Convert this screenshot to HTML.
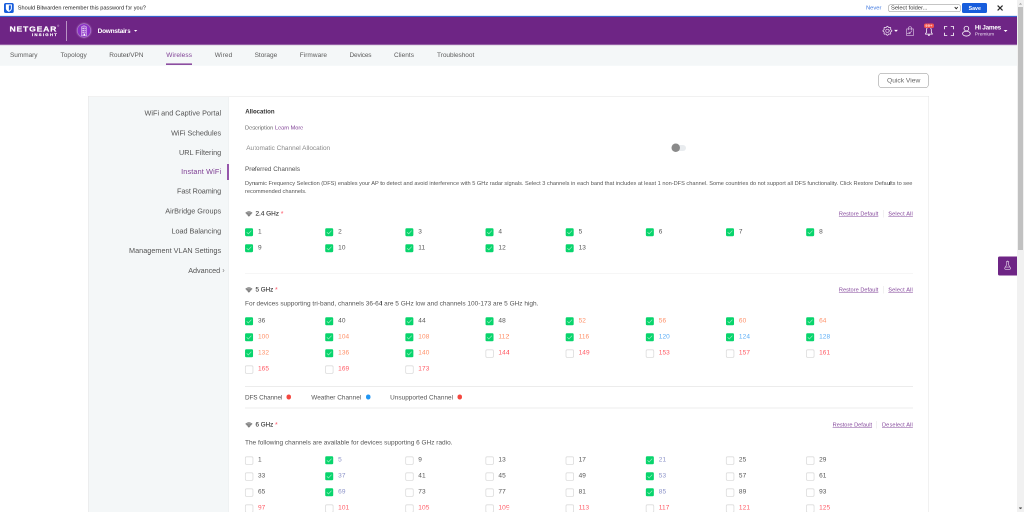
<!DOCTYPE html>
<html lang="en">
<head>
<meta charset="utf-8">
<title>NETGEAR Insight - Instant WiFi</title>
<meta name="viewport" content="width=1024, initial-scale=1">
<style>
html,body{margin:0;padding:0;width:1024px;height:512px;overflow:hidden;background:#fff}
#stage{position:absolute;left:0;top:0;width:2048px;height:1024px;overflow:hidden;transform:scale(.5);transform-origin:0 0;will-change:transform;
 font-family:"Liberation Sans",sans-serif;background:#fff}
#stage div,#stage span,#stage a,#stage svg,#stage button,#stage aside,#stage h3,#stage h4,#stage label,#stage i{position:absolute;display:block;margin:0;padding:0}
#stage span,#stage a,#stage h3,#stage h4,#stage label{line-height:1;white-space:nowrap;font-weight:400;text-decoration:none}
#stage button{border:0;font:inherit}
#stage ul,#stage li{list-style:none;margin:0;padding:0;position:static}
#stage header,#stage nav,#stage main,#stage section,#stage #bw{position:static}
</style>
</head>
<body>
<div id="stage">
<div id="bw">
<div style="left:0px;top:0px;width:2034px;height:32px;background:#fff;"></div>
<div style="left:0px;top:31px;width:2034px;height:1px;background:#c6d3f1;"></div>
<div style="left:0px;top:32px;width:2034px;height:2px;background:#3563cf;"></div>
<svg style="left:8px;top:6px;width:20px;height:20px;" viewBox="0 0 40 40" preserveAspectRatio="none"><rect x="0" y="0" width="39" height="40" rx="7" fill="#175ddc"/><path d="M7.500 5.500h24v15.500c0 7-6 11.500-12 14.500C13.500 32.500 7.500 28 7.500 21z" fill="#fff"/><path d="M19.500 9.500v21.500c4.500-2.500 8-5.500 8-10V9.500z" fill="#175ddc"/></svg>
<span style="left:35.5px;top:10.15px;font-size:11.17px;color:#222;">Should Bitwarden remember this password for you?</span>
<a style="left:1732px;top:10.23px;font-size:11.55px;color:#3f78e0;">Never</a>
<div style="left:1777px;top:8.5px;width:143.6px;height:15px;background:#fff;border:1px solid #8a8a8a;border-radius:3px;box-sizing:border-box;"></div>
<span style="left:1782px;top:10.25px;font-size:11.52px;color:#333;">Select folder...</span>
<svg style="left:1908px;top:13px;width:9px;height:6px;" viewBox="-0.4 0 9 6" preserveAspectRatio="none"><path d="M1 1l3 3.500L7 1" fill="none" stroke="#222" stroke-width="1.800"/></svg>
<div style="left:1924.4px;top:5.6px;width:49.6px;height:20.2px;background:#175ddc;border-radius:3px;"></div>
<span style="left:1937.2px;top:11.28px;font-size:10.53px;color:#fff;font-weight:700;">Save</span>
<svg style="left:1994px;top:9px;width:13px;height:14px;" viewBox="0 -0.774 12.581 13.548" preserveAspectRatio="none"><path d="M1.200 1.200l9.600 9.600M10.800 1.200l-9.600 9.600" fill="none" stroke="#2a2a2a" stroke-width="2.300"/></svg>
</div>
<header>
<div style="left:0px;top:34px;width:2034px;height:55px;background:#6e2585;"></div>
<div style="left:0px;top:89px;width:2034px;height:1px;background:#b593c0;"></div>
<span class="logo" style="left:19px;top:50.2px;font-size:15px;color:#fff;font-weight:700;letter-spacing:1.37px;-webkit-text-stroke:0.4px #fff;transform:scaleX(1.15);transform-origin:0 0;">NETGEAR</span>
<span style="left:114.4px;top:50px;font-size:5.2px;color:#e8d8ee;">®</span>
<span class="logo2" style="left:64px;top:66.01px;font-size:7.2px;color:#fff;font-weight:700;letter-spacing:2.05px;-webkit-text-stroke:0.3px #fff;transform:scaleX(1.2);transform-origin:0 0;">INSIGHT</span>
<div style="left:132px;top:41.6px;width:2px;height:40.2px;background:#b892c4;"></div>
<div style="left:154px;top:47px;width:28px;height:28px;background:#8a2fc6;border-radius:50%;box-sizing:border-box;border:1.5px solid #b98fd0;box-shadow:0 0 3px 1px rgba(200,160,220,.55);"></div>
<svg style="left:162px;top:50px;width:12px;height:23px;" viewBox="0 -0.4 12 23" preserveAspectRatio="none"><path d="M3 2L6 .9 9 2" fill="none" stroke="#dcc2ee" stroke-width="1"/><rect x=".9" y="3.200" width="10.200" height="17.900" fill="rgba(255,255,255,.2)" stroke="#d9bdec" stroke-width="1.200"/><path d="M2.900 6.800h2.900M7.300 6.800h1.800M2.900 10.500h2.900M7.300 10.500h1.800M2.900 14.200h2.900M7.300 14.200h1.800" stroke="#fff" stroke-width="1.500" fill="none"/><rect x="5.200" y="17" width="2.800" height="3.600" fill="#fff"/></svg>
<span style="left:195.2px;top:55px;font-size:13px;color:#fff;font-weight:700;letter-spacing:-0.45px;">Downstairs</span>
<svg style="left:268px;top:60px;width:7px;height:4px;" viewBox="0 0 10.606 6.111" preserveAspectRatio="none"><path d="M0 0h10L5 5.500z" fill="#fff"/></svg>
<svg style="left:1764px;top:51px;width:21px;height:21px;" viewBox="-0.8 -0.6 21 21" preserveAspectRatio="none"><path d="M19.0 10.0L18.9 10.5L18.6 10.9L18.2 11.3L17.7 11.6L17.2 11.9L16.8 12.2L16.6 12.5L16.4 12.9L16.4 13.3L16.5 13.8L16.6 14.3L16.7 14.9L16.7 15.5L16.6 16.0L16.4 16.4L16.0 16.6L15.5 16.7L14.9 16.7L14.3 16.6L13.8 16.5L13.3 16.4L12.9 16.4L12.5 16.6L12.2 16.8L11.9 17.2L11.6 17.7L11.3 18.2L10.9 18.6L10.5 18.9L10.0 19.0L9.5 18.9L9.1 18.6L8.7 18.2L8.4 17.7L8.1 17.2L7.8 16.8L7.5 16.6L7.1 16.4L6.7 16.4L6.3 16.5L5.7 16.6L5.1 16.7L4.5 16.7L4.0 16.6L3.6 16.4L3.4 16.0L3.3 15.5L3.3 14.9L3.4 14.3L3.5 13.8L3.6 13.3L3.6 12.9L3.4 12.5L3.2 12.2L2.8 11.9L2.3 11.6L1.8 11.3L1.4 10.9L1.1 10.5L1.0 10.0L1.1 9.5L1.4 9.1L1.8 8.7L2.3 8.4L2.8 8.1L3.2 7.8L3.4 7.5L3.6 7.1L3.6 6.7L3.5 6.2L3.4 5.7L3.3 5.1L3.3 4.5L3.4 4.0L3.6 3.6L4.0 3.4L4.5 3.3L5.1 3.3L5.7 3.4L6.2 3.5L6.7 3.6L7.1 3.6L7.5 3.4L7.8 3.2L8.1 2.8L8.4 2.3L8.7 1.8L9.1 1.4L9.5 1.1L10.0 1.0L10.5 1.1L10.9 1.4L11.3 1.8L11.6 2.3L11.9 2.8L12.2 3.2L12.5 3.4L12.9 3.6L13.3 3.6L13.8 3.5L14.3 3.4L14.9 3.3L15.5 3.3L16.0 3.4L16.4 3.6L16.6 4.0L16.7 4.5L16.7 5.1L16.6 5.7L16.5 6.2L16.4 6.7L16.4 7.1L16.6 7.5L16.8 7.8L17.2 8.1L17.7 8.4L18.2 8.7L18.6 9.1L18.9 9.5z" fill="none" stroke="#f4ecf7" stroke-width="1.5" stroke-linejoin="round"/><circle cx="10" cy="10" r="3.3" fill="none" stroke="#e8daee" stroke-width="1.3"/></svg>
<svg style="left:1788px;top:59px;width:8px;height:5px;" viewBox="-0.263 -1.1 10.526 6.875" preserveAspectRatio="none"><path d="M0 0h10L5 5.500z" fill="#fff"/></svg>
<svg style="left:1812px;top:52px;width:16px;height:21px;" viewBox="0 0 16 21" preserveAspectRatio="none"><path d="M1.300 5.800h13.400v13.200H1.300z" fill="none" stroke="#dcc8e4" stroke-width="1.250"/><path d="M5 8.200V4.300a3 3 0 0 1 6 0v3.900" fill="none" stroke="#dcc8e4" stroke-width="1.250"/><path d="M2 15.300h5.500l1.500-1.800M5.300 11.800l2.200 2.300 4.800-5" fill="none" stroke="#dcc8e4" stroke-width="1.250"/></svg>
<svg style="left:1849px;top:53px;width:18px;height:20px;" viewBox="-0.2 -0.2 18 20" preserveAspectRatio="none"><path d="M8.600 1.500c-3 0-4.800 2.200-4.800 5v4.800L1.500 15h14.200l-2.300-3.700V6.500c0-2.800-1.800-5-4.800-5z" fill="none" stroke="#fff" stroke-width="1.500" stroke-linejoin="round"/><path d="M6.400 16.400a2.200 2.200 0 0 0 4.400 0z" fill="#fff"/></svg>
<div style="left:1847.8px;top:46.6px;width:20.4px;height:9.4px;background:#f2534f;border-radius:3.5px;"></div>
<span style="left:1850.8px;top:47.57px;font-size:7.6px;color:#ffe3e0;font-weight:700;letter-spacing:0.55px;">99+</span>
<svg style="left:1888px;top:52px;width:20px;height:20px;" viewBox="0 0 20 20" preserveAspectRatio="none"><path d="M1 6.500V1h5.500M13.500 1H19v5.500M19 13.500V19h-5.500M6.500 19H1v-5.500" fill="none" stroke="#fff" stroke-width="1.700"/></svg>
<svg style="left:1924px;top:50px;width:18px;height:23px;" viewBox="0 -0.8 18 23" preserveAspectRatio="none"><ellipse cx="8.800" cy="16.500" rx="7.700" ry="4.800" fill="none" stroke="#fff" stroke-width="1.600"/><circle cx="8.800" cy="6.400" r="4.700" fill="#6e2585" stroke="#fff" stroke-width="1.600"/></svg>
<span style="left:1949.8px;top:48.96px;font-size:12.8px;color:#fff;font-weight:700;letter-spacing:-0.52px;">Hi James</span>
<span style="left:1949.8px;top:63.47px;font-size:9.6px;color:#eadcf0;">Premium</span>
<svg style="left:2007px;top:60px;width:8px;height:4px;" viewBox="-0.526 0 10.526 5.5" preserveAspectRatio="none"><path d="M0 0h10L5 5.500z" fill="#fff"/></svg>
</header>
<nav>
<div style="left:0px;top:90px;width:2034px;height:41px;background:#f4f7f8;"></div>
<div style="left:0px;top:131px;width:2034px;height:1px;background:#f8fafb;"></div>
<div style="left:0px;top:90px;width:2034px;height:1px;background:#d6c7dc;"></div>
<a style="left:20px;top:103px;font-size:13px;color:#5c5c5c;letter-spacing:-0.1px;">Summary</a>
<a style="left:121px;top:103px;font-size:13px;color:#5c5c5c;letter-spacing:0.07px;">Topology</a>
<a style="left:218.5px;top:103px;font-size:13px;color:#5c5c5c;letter-spacing:-0.1px;">Router/VPN</a>
<a style="left:332.5px;top:103px;font-size:13px;color:#7d3d93;letter-spacing:0.24px;">Wireless</a>
<div style="left:331.7px;top:126px;width:52.3px;height:1px;background:#e0cfe6;"></div>
<div style="left:331.7px;top:127px;width:52.3px;height:3px;background:#8c4ea0;"></div>
<a style="left:429.5px;top:103px;font-size:13px;color:#5c5c5c;letter-spacing:0.26px;">Wired</a>
<a style="left:509.2px;top:103px;font-size:13px;color:#5c5c5c;letter-spacing:-0.04px;">Storage</a>
<a style="left:599.5px;top:103px;font-size:13px;color:#5c5c5c;letter-spacing:0.05px;">Firmware</a>
<a style="left:699px;top:103px;font-size:13px;color:#5c5c5c;letter-spacing:-0.37px;">Devices</a>
<a style="left:788px;top:103px;font-size:13px;color:#5c5c5c;letter-spacing:0.04px;">Clients</a>
<a style="left:874px;top:103px;font-size:13px;color:#5c5c5c;letter-spacing:-0.08px;">Troubleshoot</a>
</nav>
<main>
<button style="left:1757px;top:146px;width:100px;height:29.5px;border:1.2px solid #8c8c8c;border-radius:6px;box-sizing:border-box;background:#fff;"></button>
<span style="left:1774px;top:154.29px;font-size:13.36px;color:#666;">Quick View</span>
<div style="left:176px;top:192px;width:1682.4px;height:848px;border:1px solid #e3e3e3;box-sizing:border-box;background:#fff;"></div>
<aside style="left:177px;top:193.5px;width:280.5px;height:846.5px;background:#f4f7f8;border-right:1px solid #e9ecee;box-sizing:border-box;"></aside>
<a style="left:289px;top:219.47px;font-size:14.56px;color:#555;letter-spacing:0.02px;">WiFi and Captive Portal</a>
<a style="left:342.2px;top:258.67px;font-size:14.56px;color:#555;letter-spacing:-0.07px;">WiFi Schedules</a>
<a style="left:358px;top:298.07px;font-size:14.56px;color:#555;">URL Filtering</a>
<a style="left:362.2px;top:336.07px;font-size:14.56px;color:#7d3d93;letter-spacing:0.3px;">Instant WiFi</a>
<a style="left:354px;top:375.47px;font-size:14.56px;color:#555;letter-spacing:-0.2px;">Fast Roaming</a>
<a style="left:330.5px;top:415.47px;font-size:14.56px;color:#555;letter-spacing:0.02px;">AirBridge Groups</a>
<a style="left:343px;top:454.67px;font-size:14.56px;color:#555;letter-spacing:-0.08px;">Load Balancing</a>
<a style="left:258px;top:494.07px;font-size:14.56px;color:#555;letter-spacing:0.03px;">Management VLAN Settings</a>
<a style="left:376.5px;top:534.07px;font-size:14.56px;color:#555;letter-spacing:-0.11px;">Advanced</a>
<span style="left:444.4px;top:533.47px;font-size:14.8px;color:#777;">›</span>
<div style="left:454px;top:327.5px;width:3.5px;height:32px;background:#9656ab;"></div>
<h3 style="left:490.4px;top:217.1px;font-size:12.17px;color:#333;font-weight:700;">Allocation</h3>
<span style="left:490px;top:249.92px;font-size:11.2px;color:#666;letter-spacing:0.06px;">Description</span>
<a style="left:550px;top:249.92px;font-size:11.2px;color:#7d3d93;letter-spacing:-0.07px;">Learn More</a>
<span style="left:492.4px;top:290.47px;font-size:12.92px;color:#888;">Automatic Channel Allocation</span>
<div style="left:1344px;top:289.8px;width:27.6px;height:12.2px;background:#e9ecef;border-radius:6px;"></div>
<div style="left:1342.6px;top:287.1px;width:17px;height:17px;background:#8a8a8a;border-radius:50%;"></div>
<span style="left:490px;top:332.06px;font-size:12.69px;color:#555;">Preferred Channels</span>
<span style="left:490px;top:361.27px;font-size:11.25px;color:#555;">Dynamic Frequency Selection (DFS) enables your AP to detect and avoid interference with 5 GHz radar signals. Select 3 channels in each band that includes at least 1 non-DFS channel. Some countries do not support all DFS functionality. Click Restore Defaults to see</span>
<span style="left:490px;top:376.77px;font-size:11.25px;color:#555;">recommended channels.</span>
<section>
<svg style="left:490px;top:421px;width:16px;height:13px;" viewBox="-0.432 -0.975 17.297 14.083" preserveAspectRatio="none"><path d="M8 12.600L.2 4.300C2.200 2.100 5 .7 8 .7s5.800 1.400 7.800 3.600z" fill="#7c7c7c"/><path d="M1.200 5.800C3 4 5.400 3 8 3s5 1 6.800 2.800M3.300 8.300C4.500 7.100 6.200 6.400 8 6.400s3.500.7 4.700 1.900" fill="none" stroke="#fff" stroke-width=".7" stroke-opacity=".75"/></svg>
<h4 style="left:511px;top:421.15px;font-size:12.81px;color:#3a3a3a;-webkit-text-stroke:0.25px #3a3a3a;">2.4 GHz</h4>
<span style="left:561.4px;top:419.85px;font-size:14px;color:#ff5566;">*</span>
<a style="left:1677.8px;top:422.49px;font-size:11.24px;color:#83469a;letter-spacing:0.05px;text-decoration:underline;text-decoration-thickness:1px;text-underline-offset:1.1px;">Restore Default</a>
<div style="left:1765.5px;top:420.3px;width:1.2px;height:15.2px;background:#e2e2e2;"></div>
<a style="left:1776.5px;top:422.49px;font-size:11.24px;color:#83469a;letter-spacing:0.31px;text-decoration:underline;text-decoration-thickness:1px;text-underline-offset:1.1px;">Select All</a>
<ul>
<li>
<svg style="left:490px;top:456px;width:17px;height:17px;" viewBox="-0.1 -0.5 17 17" preserveAspectRatio="none"><rect width="16" height="16" rx="2.400" fill="#08d46c"/><path d="M3.700 8.300l2.900 3 5.700-6.200" fill="none" stroke="#fff" stroke-opacity=".6" stroke-width="1.400" stroke-linecap="round" stroke-linejoin="round"/></svg>
<label style="left:515.9px;top:456.3px;font-size:13px;color:#555;letter-spacing:0.2px;">1</label>
</li>
<li>
<svg style="left:650px;top:456px;width:17px;height:17px;" viewBox="-0.42 -0.5 17 17" preserveAspectRatio="none"><rect width="16" height="16" rx="2.400" fill="#08d46c"/><path d="M3.700 8.300l2.900 3 5.700-6.200" fill="none" stroke="#fff" stroke-opacity=".6" stroke-width="1.400" stroke-linecap="round" stroke-linejoin="round"/></svg>
<label style="left:676.22px;top:456.3px;font-size:13px;color:#555;letter-spacing:0.2px;">2</label>
</li>
<li>
<svg style="left:810px;top:456px;width:17px;height:17px;" viewBox="-0.74 -0.5 17 17" preserveAspectRatio="none"><rect width="16" height="16" rx="2.400" fill="#08d46c"/><path d="M3.700 8.300l2.900 3 5.700-6.200" fill="none" stroke="#fff" stroke-opacity=".6" stroke-width="1.400" stroke-linecap="round" stroke-linejoin="round"/></svg>
<label style="left:836.54px;top:456.3px;font-size:13px;color:#555;letter-spacing:0.2px;">3</label>
</li>
<li>
<svg style="left:971px;top:456px;width:17px;height:17px;" viewBox="-0.06 -0.5 17 17" preserveAspectRatio="none"><rect width="16" height="16" rx="2.400" fill="#08d46c"/><path d="M3.700 8.300l2.900 3 5.700-6.200" fill="none" stroke="#fff" stroke-opacity=".6" stroke-width="1.400" stroke-linecap="round" stroke-linejoin="round"/></svg>
<label style="left:996.86px;top:456.3px;font-size:13px;color:#555;letter-spacing:0.2px;">4</label>
</li>
<li>
<svg style="left:1131px;top:456px;width:17px;height:17px;" viewBox="-0.38 -0.5 17 17" preserveAspectRatio="none"><rect width="16" height="16" rx="2.400" fill="#08d46c"/><path d="M3.700 8.300l2.900 3 5.700-6.200" fill="none" stroke="#fff" stroke-opacity=".6" stroke-width="1.400" stroke-linecap="round" stroke-linejoin="round"/></svg>
<label style="left:1157.18px;top:456.3px;font-size:13px;color:#555;letter-spacing:0.2px;">5</label>
</li>
<li>
<svg style="left:1291px;top:456px;width:17px;height:17px;" viewBox="-0.7 -0.5 17 17" preserveAspectRatio="none"><rect width="16" height="16" rx="2.400" fill="#08d46c"/><path d="M3.700 8.300l2.900 3 5.700-6.200" fill="none" stroke="#fff" stroke-opacity=".6" stroke-width="1.400" stroke-linecap="round" stroke-linejoin="round"/></svg>
<label style="left:1317.5px;top:456.3px;font-size:13px;color:#555;letter-spacing:0.2px;">6</label>
</li>
<li>
<svg style="left:1452px;top:456px;width:17px;height:17px;" viewBox="-0.02 -0.5 17 17" preserveAspectRatio="none"><rect width="16" height="16" rx="2.400" fill="#08d46c"/><path d="M3.700 8.300l2.900 3 5.700-6.200" fill="none" stroke="#fff" stroke-opacity=".6" stroke-width="1.400" stroke-linecap="round" stroke-linejoin="round"/></svg>
<label style="left:1477.82px;top:456.3px;font-size:13px;color:#555;letter-spacing:0.2px;">7</label>
</li>
<li>
<svg style="left:1612px;top:456px;width:17px;height:17px;" viewBox="-0.34 -0.5 17 17" preserveAspectRatio="none"><rect width="16" height="16" rx="2.400" fill="#08d46c"/><path d="M3.700 8.300l2.900 3 5.700-6.200" fill="none" stroke="#fff" stroke-opacity=".6" stroke-width="1.400" stroke-linecap="round" stroke-linejoin="round"/></svg>
<label style="left:1638.14px;top:456.3px;font-size:13px;color:#555;letter-spacing:0.2px;">8</label>
</li>
<li>
<svg style="left:490px;top:488px;width:17px;height:17px;" viewBox="-0.1 -0.5 17 17" preserveAspectRatio="none"><rect width="16" height="16" rx="2.400" fill="#08d46c"/><path d="M3.700 8.300l2.900 3 5.700-6.200" fill="none" stroke="#fff" stroke-opacity=".6" stroke-width="1.400" stroke-linecap="round" stroke-linejoin="round"/></svg>
<label style="left:515.9px;top:488.3px;font-size:13px;color:#555;letter-spacing:0.2px;">9</label>
</li>
<li>
<svg style="left:650px;top:488px;width:17px;height:17px;" viewBox="-0.42 -0.5 17 17" preserveAspectRatio="none"><rect width="16" height="16" rx="2.400" fill="#08d46c"/><path d="M3.700 8.300l2.900 3 5.700-6.200" fill="none" stroke="#fff" stroke-opacity=".6" stroke-width="1.400" stroke-linecap="round" stroke-linejoin="round"/></svg>
<label style="left:676.22px;top:488.3px;font-size:13px;color:#555;letter-spacing:0.2px;">10</label>
</li>
<li>
<svg style="left:810px;top:488px;width:17px;height:17px;" viewBox="-0.74 -0.5 17 17" preserveAspectRatio="none"><rect width="16" height="16" rx="2.400" fill="#08d46c"/><path d="M3.700 8.300l2.900 3 5.700-6.200" fill="none" stroke="#fff" stroke-opacity=".6" stroke-width="1.400" stroke-linecap="round" stroke-linejoin="round"/></svg>
<label style="left:836.54px;top:488.3px;font-size:13px;color:#555;letter-spacing:0.2px;">11</label>
</li>
<li>
<svg style="left:971px;top:488px;width:17px;height:17px;" viewBox="-0.06 -0.5 17 17" preserveAspectRatio="none"><rect width="16" height="16" rx="2.400" fill="#08d46c"/><path d="M3.700 8.300l2.900 3 5.700-6.200" fill="none" stroke="#fff" stroke-opacity=".6" stroke-width="1.400" stroke-linecap="round" stroke-linejoin="round"/></svg>
<label style="left:996.86px;top:488.3px;font-size:13px;color:#555;letter-spacing:0.2px;">12</label>
</li>
<li>
<svg style="left:1131px;top:488px;width:17px;height:17px;" viewBox="-0.38 -0.5 17 17" preserveAspectRatio="none"><rect width="16" height="16" rx="2.400" fill="#08d46c"/><path d="M3.700 8.300l2.900 3 5.700-6.200" fill="none" stroke="#fff" stroke-opacity=".6" stroke-width="1.400" stroke-linecap="round" stroke-linejoin="round"/></svg>
<label style="left:1157.18px;top:488.3px;font-size:13px;color:#555;letter-spacing:0.2px;">13</label>
</li>
</ul>
</section>
<div style="left:490px;top:545.9px;width:1335.6px;height:1.2px;background:#ececec;"></div>
<section>
<svg style="left:490px;top:573px;width:16px;height:13px;" viewBox="-0.432 -0.975 17.297 14.083" preserveAspectRatio="none"><path d="M8 12.600L.2 4.300C2.200 2.100 5 .7 8 .7s5.800 1.400 7.800 3.600z" fill="#7c7c7c"/><path d="M1.200 5.800C3 4 5.400 3 8 3s5 1 6.800 2.800M3.300 8.300C4.500 7.100 6.200 6.400 8 6.400s3.500.7 4.700 1.900" fill="none" stroke="#fff" stroke-width=".7" stroke-opacity=".75"/></svg>
<h4 style="left:511px;top:573.4px;font-size:12.53px;color:#3a3a3a;-webkit-text-stroke:0.25px #3a3a3a;">5 GHz</h4>
<span style="left:549.9px;top:571.85px;font-size:14px;color:#ff5566;">*</span>
<a style="left:1677.8px;top:574.49px;font-size:11.24px;color:#83469a;letter-spacing:0.05px;text-decoration:underline;text-decoration-thickness:1px;text-underline-offset:1.1px;">Restore Default</a>
<div style="left:1765.5px;top:572.3px;width:1.2px;height:15.2px;background:#e2e2e2;"></div>
<a style="left:1776.5px;top:574.49px;font-size:11.24px;color:#83469a;letter-spacing:0.31px;text-decoration:underline;text-decoration-thickness:1px;text-underline-offset:1.1px;">Select All</a>
<span style="left:490px;top:600.82px;font-size:12.97px;color:#555;">For devices supporting tri-band, channels 36-64 are 5 GHz low and channels 100-173 are 5 GHz high.</span>
<ul>
<li>
<svg style="left:490px;top:634px;width:17px;height:17px;" viewBox="-0.1 -0.6 17 17" preserveAspectRatio="none"><rect width="16" height="16" rx="2.400" fill="#08d46c"/><path d="M3.700 8.300l2.900 3 5.700-6.200" fill="none" stroke="#fff" stroke-opacity=".6" stroke-width="1.400" stroke-linecap="round" stroke-linejoin="round"/></svg>
<label style="left:515.9px;top:634.4px;font-size:13px;color:#555;letter-spacing:0.2px;">36</label>
</li>
<li>
<svg style="left:650px;top:634px;width:17px;height:17px;" viewBox="-0.42 -0.6 17 17" preserveAspectRatio="none"><rect width="16" height="16" rx="2.400" fill="#08d46c"/><path d="M3.700 8.300l2.900 3 5.700-6.200" fill="none" stroke="#fff" stroke-opacity=".6" stroke-width="1.400" stroke-linecap="round" stroke-linejoin="round"/></svg>
<label style="left:676.22px;top:634.4px;font-size:13px;color:#555;letter-spacing:0.2px;">40</label>
</li>
<li>
<svg style="left:810px;top:634px;width:17px;height:17px;" viewBox="-0.74 -0.6 17 17" preserveAspectRatio="none"><rect width="16" height="16" rx="2.400" fill="#08d46c"/><path d="M3.700 8.300l2.900 3 5.700-6.200" fill="none" stroke="#fff" stroke-opacity=".6" stroke-width="1.400" stroke-linecap="round" stroke-linejoin="round"/></svg>
<label style="left:836.54px;top:634.4px;font-size:13px;color:#555;letter-spacing:0.2px;">44</label>
</li>
<li>
<svg style="left:971px;top:634px;width:17px;height:17px;" viewBox="-0.06 -0.6 17 17" preserveAspectRatio="none"><rect width="16" height="16" rx="2.400" fill="#08d46c"/><path d="M3.700 8.300l2.900 3 5.700-6.200" fill="none" stroke="#fff" stroke-opacity=".6" stroke-width="1.400" stroke-linecap="round" stroke-linejoin="round"/></svg>
<label style="left:996.86px;top:634.4px;font-size:13px;color:#555;letter-spacing:0.2px;">48</label>
</li>
<li>
<svg style="left:1131px;top:634px;width:17px;height:17px;" viewBox="-0.38 -0.6 17 17" preserveAspectRatio="none"><rect width="16" height="16" rx="2.400" fill="#08d46c"/><path d="M3.700 8.300l2.900 3 5.700-6.200" fill="none" stroke="#fff" stroke-opacity=".6" stroke-width="1.400" stroke-linecap="round" stroke-linejoin="round"/></svg>
<label style="left:1157.18px;top:634.4px;font-size:13px;color:#ff9068;letter-spacing:0.2px;">52</label>
</li>
<li>
<svg style="left:1291px;top:634px;width:17px;height:17px;" viewBox="-0.7 -0.6 17 17" preserveAspectRatio="none"><rect width="16" height="16" rx="2.400" fill="#08d46c"/><path d="M3.700 8.300l2.900 3 5.700-6.200" fill="none" stroke="#fff" stroke-opacity=".6" stroke-width="1.400" stroke-linecap="round" stroke-linejoin="round"/></svg>
<label style="left:1317.5px;top:634.4px;font-size:13px;color:#ff9068;letter-spacing:0.2px;">56</label>
</li>
<li>
<svg style="left:1452px;top:634px;width:17px;height:17px;" viewBox="-0.02 -0.6 17 17" preserveAspectRatio="none"><rect width="16" height="16" rx="2.400" fill="#08d46c"/><path d="M3.700 8.300l2.900 3 5.700-6.200" fill="none" stroke="#fff" stroke-opacity=".6" stroke-width="1.400" stroke-linecap="round" stroke-linejoin="round"/></svg>
<label style="left:1477.82px;top:634.4px;font-size:13px;color:#ff9068;letter-spacing:0.2px;">60</label>
</li>
<li>
<svg style="left:1612px;top:634px;width:17px;height:17px;" viewBox="-0.34 -0.6 17 17" preserveAspectRatio="none"><rect width="16" height="16" rx="2.400" fill="#08d46c"/><path d="M3.700 8.300l2.900 3 5.700-6.200" fill="none" stroke="#fff" stroke-opacity=".6" stroke-width="1.400" stroke-linecap="round" stroke-linejoin="round"/></svg>
<label style="left:1638.14px;top:634.4px;font-size:13px;color:#ff9068;letter-spacing:0.2px;">64</label>
</li>
<li>
<svg style="left:490px;top:666px;width:17px;height:17px;" viewBox="-0.1 -0.6 17 17" preserveAspectRatio="none"><rect width="16" height="16" rx="2.400" fill="#08d46c"/><path d="M3.700 8.300l2.900 3 5.700-6.200" fill="none" stroke="#fff" stroke-opacity=".6" stroke-width="1.400" stroke-linecap="round" stroke-linejoin="round"/></svg>
<label style="left:515.9px;top:666.4px;font-size:13px;color:#ff9068;letter-spacing:0.2px;">100</label>
</li>
<li>
<svg style="left:650px;top:666px;width:17px;height:17px;" viewBox="-0.42 -0.6 17 17" preserveAspectRatio="none"><rect width="16" height="16" rx="2.400" fill="#08d46c"/><path d="M3.700 8.300l2.900 3 5.700-6.200" fill="none" stroke="#fff" stroke-opacity=".6" stroke-width="1.400" stroke-linecap="round" stroke-linejoin="round"/></svg>
<label style="left:676.22px;top:666.4px;font-size:13px;color:#ff9068;letter-spacing:0.2px;">104</label>
</li>
<li>
<svg style="left:810px;top:666px;width:17px;height:17px;" viewBox="-0.74 -0.6 17 17" preserveAspectRatio="none"><rect width="16" height="16" rx="2.400" fill="#08d46c"/><path d="M3.700 8.300l2.900 3 5.700-6.200" fill="none" stroke="#fff" stroke-opacity=".6" stroke-width="1.400" stroke-linecap="round" stroke-linejoin="round"/></svg>
<label style="left:836.54px;top:666.4px;font-size:13px;color:#ff9068;letter-spacing:0.2px;">108</label>
</li>
<li>
<svg style="left:971px;top:666px;width:17px;height:17px;" viewBox="-0.06 -0.6 17 17" preserveAspectRatio="none"><rect width="16" height="16" rx="2.400" fill="#08d46c"/><path d="M3.700 8.300l2.900 3 5.700-6.200" fill="none" stroke="#fff" stroke-opacity=".6" stroke-width="1.400" stroke-linecap="round" stroke-linejoin="round"/></svg>
<label style="left:996.86px;top:666.4px;font-size:13px;color:#ff9068;letter-spacing:0.2px;">112</label>
</li>
<li>
<svg style="left:1131px;top:666px;width:17px;height:17px;" viewBox="-0.38 -0.6 17 17" preserveAspectRatio="none"><rect width="16" height="16" rx="2.400" fill="#08d46c"/><path d="M3.700 8.300l2.900 3 5.700-6.200" fill="none" stroke="#fff" stroke-opacity=".6" stroke-width="1.400" stroke-linecap="round" stroke-linejoin="round"/></svg>
<label style="left:1157.18px;top:666.4px;font-size:13px;color:#ff9068;letter-spacing:0.2px;">116</label>
</li>
<li>
<svg style="left:1291px;top:666px;width:17px;height:17px;" viewBox="-0.7 -0.6 17 17" preserveAspectRatio="none"><rect width="16" height="16" rx="2.400" fill="#08d46c"/><path d="M3.700 8.300l2.900 3 5.700-6.200" fill="none" stroke="#fff" stroke-opacity=".6" stroke-width="1.400" stroke-linecap="round" stroke-linejoin="round"/></svg>
<label style="left:1317.5px;top:666.4px;font-size:13px;color:#5aacf6;letter-spacing:0.2px;">120</label>
</li>
<li>
<svg style="left:1452px;top:666px;width:17px;height:17px;" viewBox="-0.02 -0.6 17 17" preserveAspectRatio="none"><rect width="16" height="16" rx="2.400" fill="#08d46c"/><path d="M3.700 8.300l2.900 3 5.700-6.200" fill="none" stroke="#fff" stroke-opacity=".6" stroke-width="1.400" stroke-linecap="round" stroke-linejoin="round"/></svg>
<label style="left:1477.82px;top:666.4px;font-size:13px;color:#5aacf6;letter-spacing:0.2px;">124</label>
</li>
<li>
<svg style="left:1612px;top:666px;width:17px;height:17px;" viewBox="-0.34 -0.6 17 17" preserveAspectRatio="none"><rect width="16" height="16" rx="2.400" fill="#08d46c"/><path d="M3.700 8.300l2.900 3 5.700-6.200" fill="none" stroke="#fff" stroke-opacity=".6" stroke-width="1.400" stroke-linecap="round" stroke-linejoin="round"/></svg>
<label style="left:1638.14px;top:666.4px;font-size:13px;color:#5aacf6;letter-spacing:0.2px;">128</label>
</li>
<li>
<svg style="left:490px;top:698px;width:17px;height:17px;" viewBox="-0.1 -0.6 17 17" preserveAspectRatio="none"><rect width="16" height="16" rx="2.400" fill="#08d46c"/><path d="M3.700 8.300l2.900 3 5.700-6.200" fill="none" stroke="#fff" stroke-opacity=".6" stroke-width="1.400" stroke-linecap="round" stroke-linejoin="round"/></svg>
<label style="left:515.9px;top:698.4px;font-size:13px;color:#ff9068;letter-spacing:0.2px;">132</label>
</li>
<li>
<svg style="left:650px;top:698px;width:17px;height:17px;" viewBox="-0.42 -0.6 17 17" preserveAspectRatio="none"><rect width="16" height="16" rx="2.400" fill="#08d46c"/><path d="M3.700 8.300l2.900 3 5.700-6.200" fill="none" stroke="#fff" stroke-opacity=".6" stroke-width="1.400" stroke-linecap="round" stroke-linejoin="round"/></svg>
<label style="left:676.22px;top:698.4px;font-size:13px;color:#ff9068;letter-spacing:0.2px;">136</label>
</li>
<li>
<svg style="left:810px;top:698px;width:17px;height:17px;" viewBox="-0.74 -0.6 17 17" preserveAspectRatio="none"><rect width="16" height="16" rx="2.400" fill="#08d46c"/><path d="M3.700 8.300l2.900 3 5.700-6.200" fill="none" stroke="#fff" stroke-opacity=".6" stroke-width="1.400" stroke-linecap="round" stroke-linejoin="round"/></svg>
<label style="left:836.54px;top:698.4px;font-size:13px;color:#ff9068;letter-spacing:0.2px;">140</label>
</li>
<li>
<svg style="left:970px;top:697px;width:19px;height:19px;" viewBox="-1.06 -1.6 19 19" preserveAspectRatio="none"><rect x=".6" y="1" width="15.200" height="15.200" rx="2.600" fill="#fff" stroke="#dcdcdc" stroke-width="1.600"/></svg>
<label style="left:996.86px;top:698.4px;font-size:13px;color:#ff5a64;letter-spacing:0.2px;">144</label>
</li>
<li>
<svg style="left:1130px;top:697px;width:19px;height:19px;" viewBox="-1.38 -1.6 19 19" preserveAspectRatio="none"><rect x=".6" y="1" width="15.200" height="15.200" rx="2.600" fill="#fff" stroke="#dcdcdc" stroke-width="1.600"/></svg>
<label style="left:1157.18px;top:698.4px;font-size:13px;color:#ff5a64;letter-spacing:0.2px;">149</label>
</li>
<li>
<svg style="left:1290px;top:697px;width:19px;height:19px;" viewBox="-1.7 -1.6 19 19" preserveAspectRatio="none"><rect x=".6" y="1" width="15.200" height="15.200" rx="2.600" fill="#fff" stroke="#dcdcdc" stroke-width="1.600"/></svg>
<label style="left:1317.5px;top:698.4px;font-size:13px;color:#ff5a64;letter-spacing:0.2px;">153</label>
</li>
<li>
<svg style="left:1451px;top:697px;width:19px;height:19px;" viewBox="-1.02 -1.6 19 19" preserveAspectRatio="none"><rect x=".6" y="1" width="15.200" height="15.200" rx="2.600" fill="#fff" stroke="#dcdcdc" stroke-width="1.600"/></svg>
<label style="left:1477.82px;top:698.4px;font-size:13px;color:#ff5a64;letter-spacing:0.2px;">157</label>
</li>
<li>
<svg style="left:1611px;top:697px;width:19px;height:19px;" viewBox="-1.34 -1.6 19 19" preserveAspectRatio="none"><rect x=".6" y="1" width="15.200" height="15.200" rx="2.600" fill="#fff" stroke="#dcdcdc" stroke-width="1.600"/></svg>
<label style="left:1638.14px;top:698.4px;font-size:13px;color:#ff5a64;letter-spacing:0.2px;">161</label>
</li>
<li>
<svg style="left:489px;top:729px;width:19px;height:19px;" viewBox="-1.1 -1.6 19 19" preserveAspectRatio="none"><rect x=".6" y="1" width="15.200" height="15.200" rx="2.600" fill="#fff" stroke="#dcdcdc" stroke-width="1.600"/></svg>
<label style="left:515.9px;top:730.4px;font-size:13px;color:#ff5a64;letter-spacing:0.2px;">165</label>
</li>
<li>
<svg style="left:649px;top:729px;width:19px;height:19px;" viewBox="-1.42 -1.6 19 19" preserveAspectRatio="none"><rect x=".6" y="1" width="15.200" height="15.200" rx="2.600" fill="#fff" stroke="#dcdcdc" stroke-width="1.600"/></svg>
<label style="left:676.22px;top:730.4px;font-size:13px;color:#ff5a64;letter-spacing:0.2px;">169</label>
</li>
<li>
<svg style="left:809px;top:729px;width:19px;height:19px;" viewBox="-1.74 -1.6 19 19" preserveAspectRatio="none"><rect x=".6" y="1" width="15.200" height="15.200" rx="2.600" fill="#fff" stroke="#dcdcdc" stroke-width="1.600"/></svg>
<label style="left:836.54px;top:730.4px;font-size:13px;color:#ff5a64;letter-spacing:0.2px;">173</label>
</li>
</ul>
<div style="left:490px;top:772.4px;width:1335.6px;height:1.2px;background:#ececec;"></div>
<span style="left:490px;top:788.56px;font-size:12.8px;color:#555;letter-spacing:-0.22px;">DFS Channel</span>
<div style="left:572.8px;top:789.4px;width:9.6px;height:9.6px;background:#f4473f;border-radius:50%;"></div>
<span style="left:622.5px;top:788.56px;font-size:12.8px;color:#555;letter-spacing:0.04px;">Weather Channel</span>
<div style="left:731.8px;top:789.4px;width:9.6px;height:9.6px;background:#2196f3;border-radius:50%;"></div>
<span style="left:780.2px;top:788.56px;font-size:12.8px;color:#555;letter-spacing:0.08px;">Unsupported Channel</span>
<div style="left:914.8px;top:789.4px;width:9.6px;height:9.6px;background:#f4473f;border-radius:50%;"></div>
<div style="left:490px;top:815.4px;width:1335.6px;height:1.2px;background:#ececec;"></div>
</section>
<section>
<svg style="left:490px;top:843px;width:16px;height:13px;" viewBox="-0.432 -0.975 17.297 14.083" preserveAspectRatio="none"><path d="M8 12.600L.2 4.300C2.200 2.100 5 .7 8 .7s5.800 1.400 7.800 3.600z" fill="#7c7c7c"/><path d="M1.200 5.800C3 4 5.400 3 8 3s5 1 6.800 2.800M3.300 8.300C4.500 7.100 6.200 6.400 8 6.400s3.500.7 4.700 1.900" fill="none" stroke="#fff" stroke-width=".7" stroke-opacity=".75"/></svg>
<h4 style="left:511px;top:843.4px;font-size:12.53px;color:#3a3a3a;-webkit-text-stroke:0.25px #3a3a3a;">6 GHz</h4>
<span style="left:549.9px;top:841.85px;font-size:14px;color:#ff5566;">*</span>
<a style="left:1665.3px;top:844.49px;font-size:11.24px;color:#83469a;letter-spacing:0.05px;text-decoration:underline;text-decoration-thickness:1px;text-underline-offset:1.1px;">Restore Default</a>
<div style="left:1753px;top:842.3px;width:1.2px;height:15.2px;background:#e2e2e2;"></div>
<a style="left:1764px;top:844.49px;font-size:11.24px;color:#83469a;letter-spacing:0.25px;text-decoration:underline;text-decoration-thickness:1px;text-underline-offset:1.1px;">Deselect All</a>
<span style="left:490px;top:878.85px;font-size:12.94px;color:#555;">The following channels are available for devices supporting 6 GHz radio.</span>
<ul>
<li>
<svg style="left:489px;top:911px;width:19px;height:19px;" viewBox="-1.1 -1.6 19 19" preserveAspectRatio="none"><rect x=".6" y="1" width="15.200" height="15.200" rx="2.600" fill="#fff" stroke="#dcdcdc" stroke-width="1.600"/></svg>
<label style="left:515.9px;top:912.4px;font-size:13px;color:#555;letter-spacing:0.2px;">1</label>
</li>
<li>
<svg style="left:650px;top:912px;width:17px;height:17px;" viewBox="-0.42 -0.6 17 17" preserveAspectRatio="none"><rect width="16" height="16" rx="2.400" fill="#08d46c"/><path d="M3.700 8.300l2.900 3 5.700-6.200" fill="none" stroke="#fff" stroke-opacity=".6" stroke-width="1.400" stroke-linecap="round" stroke-linejoin="round"/></svg>
<label style="left:676.22px;top:912.4px;font-size:13px;color:#8b92c8;letter-spacing:0.2px;">5</label>
</li>
<li>
<svg style="left:809px;top:911px;width:19px;height:19px;" viewBox="-1.74 -1.6 19 19" preserveAspectRatio="none"><rect x=".6" y="1" width="15.200" height="15.200" rx="2.600" fill="#fff" stroke="#dcdcdc" stroke-width="1.600"/></svg>
<label style="left:836.54px;top:912.4px;font-size:13px;color:#555;letter-spacing:0.2px;">9</label>
</li>
<li>
<svg style="left:970px;top:911px;width:19px;height:19px;" viewBox="-1.06 -1.6 19 19" preserveAspectRatio="none"><rect x=".6" y="1" width="15.200" height="15.200" rx="2.600" fill="#fff" stroke="#dcdcdc" stroke-width="1.600"/></svg>
<label style="left:996.86px;top:912.4px;font-size:13px;color:#555;letter-spacing:0.2px;">13</label>
</li>
<li>
<svg style="left:1130px;top:911px;width:19px;height:19px;" viewBox="-1.38 -1.6 19 19" preserveAspectRatio="none"><rect x=".6" y="1" width="15.200" height="15.200" rx="2.600" fill="#fff" stroke="#dcdcdc" stroke-width="1.600"/></svg>
<label style="left:1157.18px;top:912.4px;font-size:13px;color:#555;letter-spacing:0.2px;">17</label>
</li>
<li>
<svg style="left:1291px;top:912px;width:17px;height:17px;" viewBox="-0.7 -0.6 17 17" preserveAspectRatio="none"><rect width="16" height="16" rx="2.400" fill="#08d46c"/><path d="M3.700 8.300l2.900 3 5.700-6.200" fill="none" stroke="#fff" stroke-opacity=".6" stroke-width="1.400" stroke-linecap="round" stroke-linejoin="round"/></svg>
<label style="left:1317.5px;top:912.4px;font-size:13px;color:#8b92c8;letter-spacing:0.2px;">21</label>
</li>
<li>
<svg style="left:1451px;top:911px;width:19px;height:19px;" viewBox="-1.02 -1.6 19 19" preserveAspectRatio="none"><rect x=".6" y="1" width="15.200" height="15.200" rx="2.600" fill="#fff" stroke="#dcdcdc" stroke-width="1.600"/></svg>
<label style="left:1477.82px;top:912.4px;font-size:13px;color:#555;letter-spacing:0.2px;">25</label>
</li>
<li>
<svg style="left:1611px;top:911px;width:19px;height:19px;" viewBox="-1.34 -1.6 19 19" preserveAspectRatio="none"><rect x=".6" y="1" width="15.200" height="15.200" rx="2.600" fill="#fff" stroke="#dcdcdc" stroke-width="1.600"/></svg>
<label style="left:1638.14px;top:912.4px;font-size:13px;color:#555;letter-spacing:0.2px;">29</label>
</li>
<li>
<svg style="left:489px;top:943px;width:19px;height:19px;" viewBox="-1.1 -1.6 19 19" preserveAspectRatio="none"><rect x=".6" y="1" width="15.200" height="15.200" rx="2.600" fill="#fff" stroke="#dcdcdc" stroke-width="1.600"/></svg>
<label style="left:515.9px;top:944.4px;font-size:13px;color:#555;letter-spacing:0.2px;">33</label>
</li>
<li>
<svg style="left:650px;top:944px;width:17px;height:17px;" viewBox="-0.42 -0.6 17 17" preserveAspectRatio="none"><rect width="16" height="16" rx="2.400" fill="#08d46c"/><path d="M3.700 8.300l2.900 3 5.700-6.200" fill="none" stroke="#fff" stroke-opacity=".6" stroke-width="1.400" stroke-linecap="round" stroke-linejoin="round"/></svg>
<label style="left:676.22px;top:944.4px;font-size:13px;color:#8b92c8;letter-spacing:0.2px;">37</label>
</li>
<li>
<svg style="left:809px;top:943px;width:19px;height:19px;" viewBox="-1.74 -1.6 19 19" preserveAspectRatio="none"><rect x=".6" y="1" width="15.200" height="15.200" rx="2.600" fill="#fff" stroke="#dcdcdc" stroke-width="1.600"/></svg>
<label style="left:836.54px;top:944.4px;font-size:13px;color:#555;letter-spacing:0.2px;">41</label>
</li>
<li>
<svg style="left:970px;top:943px;width:19px;height:19px;" viewBox="-1.06 -1.6 19 19" preserveAspectRatio="none"><rect x=".6" y="1" width="15.200" height="15.200" rx="2.600" fill="#fff" stroke="#dcdcdc" stroke-width="1.600"/></svg>
<label style="left:996.86px;top:944.4px;font-size:13px;color:#555;letter-spacing:0.2px;">45</label>
</li>
<li>
<svg style="left:1130px;top:943px;width:19px;height:19px;" viewBox="-1.38 -1.6 19 19" preserveAspectRatio="none"><rect x=".6" y="1" width="15.200" height="15.200" rx="2.600" fill="#fff" stroke="#dcdcdc" stroke-width="1.600"/></svg>
<label style="left:1157.18px;top:944.4px;font-size:13px;color:#555;letter-spacing:0.2px;">49</label>
</li>
<li>
<svg style="left:1291px;top:944px;width:17px;height:17px;" viewBox="-0.7 -0.6 17 17" preserveAspectRatio="none"><rect width="16" height="16" rx="2.400" fill="#08d46c"/><path d="M3.700 8.300l2.900 3 5.700-6.200" fill="none" stroke="#fff" stroke-opacity=".6" stroke-width="1.400" stroke-linecap="round" stroke-linejoin="round"/></svg>
<label style="left:1317.5px;top:944.4px;font-size:13px;color:#8b92c8;letter-spacing:0.2px;">53</label>
</li>
<li>
<svg style="left:1451px;top:943px;width:19px;height:19px;" viewBox="-1.02 -1.6 19 19" preserveAspectRatio="none"><rect x=".6" y="1" width="15.200" height="15.200" rx="2.600" fill="#fff" stroke="#dcdcdc" stroke-width="1.600"/></svg>
<label style="left:1477.82px;top:944.4px;font-size:13px;color:#555;letter-spacing:0.2px;">57</label>
</li>
<li>
<svg style="left:1611px;top:943px;width:19px;height:19px;" viewBox="-1.34 -1.6 19 19" preserveAspectRatio="none"><rect x=".6" y="1" width="15.200" height="15.200" rx="2.600" fill="#fff" stroke="#dcdcdc" stroke-width="1.600"/></svg>
<label style="left:1638.14px;top:944.4px;font-size:13px;color:#555;letter-spacing:0.2px;">61</label>
</li>
<li>
<svg style="left:489px;top:975px;width:19px;height:19px;" viewBox="-1.1 -1.6 19 19" preserveAspectRatio="none"><rect x=".6" y="1" width="15.200" height="15.200" rx="2.600" fill="#fff" stroke="#dcdcdc" stroke-width="1.600"/></svg>
<label style="left:515.9px;top:976.4px;font-size:13px;color:#555;letter-spacing:0.2px;">65</label>
</li>
<li>
<svg style="left:650px;top:976px;width:17px;height:17px;" viewBox="-0.42 -0.6 17 17" preserveAspectRatio="none"><rect width="16" height="16" rx="2.400" fill="#08d46c"/><path d="M3.700 8.300l2.900 3 5.700-6.200" fill="none" stroke="#fff" stroke-opacity=".6" stroke-width="1.400" stroke-linecap="round" stroke-linejoin="round"/></svg>
<label style="left:676.22px;top:976.4px;font-size:13px;color:#8b92c8;letter-spacing:0.2px;">69</label>
</li>
<li>
<svg style="left:809px;top:975px;width:19px;height:19px;" viewBox="-1.74 -1.6 19 19" preserveAspectRatio="none"><rect x=".6" y="1" width="15.200" height="15.200" rx="2.600" fill="#fff" stroke="#dcdcdc" stroke-width="1.600"/></svg>
<label style="left:836.54px;top:976.4px;font-size:13px;color:#555;letter-spacing:0.2px;">73</label>
</li>
<li>
<svg style="left:970px;top:975px;width:19px;height:19px;" viewBox="-1.06 -1.6 19 19" preserveAspectRatio="none"><rect x=".6" y="1" width="15.200" height="15.200" rx="2.600" fill="#fff" stroke="#dcdcdc" stroke-width="1.600"/></svg>
<label style="left:996.86px;top:976.4px;font-size:13px;color:#555;letter-spacing:0.2px;">77</label>
</li>
<li>
<svg style="left:1130px;top:975px;width:19px;height:19px;" viewBox="-1.38 -1.6 19 19" preserveAspectRatio="none"><rect x=".6" y="1" width="15.200" height="15.200" rx="2.600" fill="#fff" stroke="#dcdcdc" stroke-width="1.600"/></svg>
<label style="left:1157.18px;top:976.4px;font-size:13px;color:#555;letter-spacing:0.2px;">81</label>
</li>
<li>
<svg style="left:1291px;top:976px;width:17px;height:17px;" viewBox="-0.7 -0.6 17 17" preserveAspectRatio="none"><rect width="16" height="16" rx="2.400" fill="#08d46c"/><path d="M3.700 8.300l2.900 3 5.700-6.200" fill="none" stroke="#fff" stroke-opacity=".6" stroke-width="1.400" stroke-linecap="round" stroke-linejoin="round"/></svg>
<label style="left:1317.5px;top:976.4px;font-size:13px;color:#8b92c8;letter-spacing:0.2px;">85</label>
</li>
<li>
<svg style="left:1451px;top:975px;width:19px;height:19px;" viewBox="-1.02 -1.6 19 19" preserveAspectRatio="none"><rect x=".6" y="1" width="15.200" height="15.200" rx="2.600" fill="#fff" stroke="#dcdcdc" stroke-width="1.600"/></svg>
<label style="left:1477.82px;top:976.4px;font-size:13px;color:#555;letter-spacing:0.2px;">89</label>
</li>
<li>
<svg style="left:1611px;top:975px;width:19px;height:19px;" viewBox="-1.34 -1.6 19 19" preserveAspectRatio="none"><rect x=".6" y="1" width="15.200" height="15.200" rx="2.600" fill="#fff" stroke="#dcdcdc" stroke-width="1.600"/></svg>
<label style="left:1638.14px;top:976.4px;font-size:13px;color:#555;letter-spacing:0.2px;">93</label>
</li>
<li>
<svg style="left:489px;top:1007px;width:19px;height:19px;" viewBox="-1.1 -1.6 19 19" preserveAspectRatio="none"><rect x=".6" y="1" width="15.200" height="15.200" rx="2.600" fill="#fff" stroke="#dcdcdc" stroke-width="1.600"/></svg>
<label style="left:515.9px;top:1008.4px;font-size:13px;color:#ff5a64;letter-spacing:0.2px;">97</label>
</li>
<li>
<svg style="left:649px;top:1007px;width:19px;height:19px;" viewBox="-1.42 -1.6 19 19" preserveAspectRatio="none"><rect x=".6" y="1" width="15.200" height="15.200" rx="2.600" fill="#fff" stroke="#dcdcdc" stroke-width="1.600"/></svg>
<label style="left:676.22px;top:1008.4px;font-size:13px;color:#ff5a64;letter-spacing:0.2px;">101</label>
</li>
<li>
<svg style="left:809px;top:1007px;width:19px;height:19px;" viewBox="-1.74 -1.6 19 19" preserveAspectRatio="none"><rect x=".6" y="1" width="15.200" height="15.200" rx="2.600" fill="#fff" stroke="#dcdcdc" stroke-width="1.600"/></svg>
<label style="left:836.54px;top:1008.4px;font-size:13px;color:#ff5a64;letter-spacing:0.2px;">105</label>
</li>
<li>
<svg style="left:970px;top:1007px;width:19px;height:19px;" viewBox="-1.06 -1.6 19 19" preserveAspectRatio="none"><rect x=".6" y="1" width="15.200" height="15.200" rx="2.600" fill="#fff" stroke="#dcdcdc" stroke-width="1.600"/></svg>
<label style="left:996.86px;top:1008.4px;font-size:13px;color:#ff5a64;letter-spacing:0.2px;">109</label>
</li>
<li>
<svg style="left:1130px;top:1007px;width:19px;height:19px;" viewBox="-1.38 -1.6 19 19" preserveAspectRatio="none"><rect x=".6" y="1" width="15.200" height="15.200" rx="2.600" fill="#fff" stroke="#dcdcdc" stroke-width="1.600"/></svg>
<label style="left:1157.18px;top:1008.4px;font-size:13px;color:#ff5a64;letter-spacing:0.2px;">113</label>
</li>
<li>
<svg style="left:1290px;top:1007px;width:19px;height:19px;" viewBox="-1.7 -1.6 19 19" preserveAspectRatio="none"><rect x=".6" y="1" width="15.200" height="15.200" rx="2.600" fill="#fff" stroke="#dcdcdc" stroke-width="1.600"/></svg>
<label style="left:1317.5px;top:1008.4px;font-size:13px;color:#ff5a64;letter-spacing:0.2px;">117</label>
</li>
<li>
<svg style="left:1451px;top:1007px;width:19px;height:19px;" viewBox="-1.02 -1.6 19 19" preserveAspectRatio="none"><rect x=".6" y="1" width="15.200" height="15.200" rx="2.600" fill="#fff" stroke="#dcdcdc" stroke-width="1.600"/></svg>
<label style="left:1477.82px;top:1008.4px;font-size:13px;color:#ff5a64;letter-spacing:0.2px;">121</label>
</li>
<li>
<svg style="left:1611px;top:1007px;width:19px;height:19px;" viewBox="-1.34 -1.6 19 19" preserveAspectRatio="none"><rect x=".6" y="1" width="15.200" height="15.200" rx="2.600" fill="#fff" stroke="#dcdcdc" stroke-width="1.600"/></svg>
<label style="left:1638.14px;top:1008.4px;font-size:13px;color:#ff5a64;letter-spacing:0.2px;">125</label>
</li>
</ul>
</section>
</main>
<button style="left:1996px;top:512.5px;width:38px;height:38px;background:#6e2585;border-radius:3px 0 0 3px;"></button>
<svg style="left:2007px;top:520px;width:17px;height:21px;" viewBox="-0.2 -0.8 17 21" preserveAspectRatio="none"><path d="M6.300 2.500v6L2.500 14.800c-.8 1.500 0 3 1.600 3h7.800c1.600 0 2.400-1.500 1.600-3L9.700 8.500v-6" fill="none" stroke="#e6d8ec" stroke-width="1.250" stroke-linejoin="round"/><path d="M5 2.300h6M4 13.200h8" fill="none" stroke="#e6d8ec" stroke-width="1.250"/><path d="M8 .3v2" fill="none" stroke="#e6d8ec" stroke-width="1"/></svg>
<div style="left:2034px;top:0px;width:14px;height:1024px;background:#f1f1f1;"></div>
<div style="left:2036.2px;top:14.4px;width:9.6px;height:485.6px;background:#c1c1c1;"></div>
<svg style="left:2037px;top:5px;width:8px;height:5px;" viewBox="-1 -1.035 10 6.471" preserveAspectRatio="none"><path d="M0 4.400h8L4 0z" fill="#a8a8a8"/></svg>
<svg style="left:2037px;top:1014px;width:8px;height:5px;" viewBox="-0.706 -0.926 9.412 5.789" preserveAspectRatio="none"><path d="M0 0h8L4 4.400z" fill="#5a5a5a"/></svg>
</div>
</body>
</html>
